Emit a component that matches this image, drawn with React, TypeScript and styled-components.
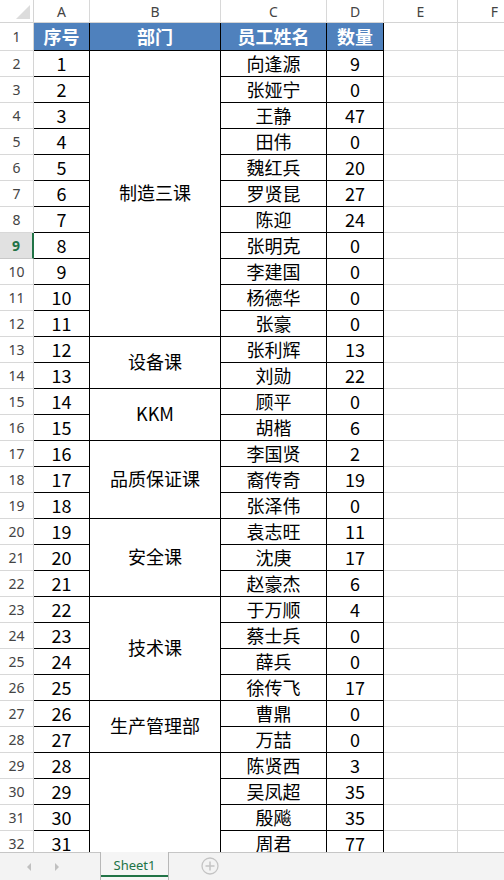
import React from "react";
import styled, { createGlobalStyle, css } from "styled-components";

const Global = createGlobalStyle`
  html, body { margin: 0; padding: 0; background: #fff; overflow: hidden; }
  #root { width: 504px; height: 880px; }
`;

const Page = styled.div`
  width: 504px;
  height: 880px;
  display: flex;
  flex-direction: column;
  overflow: hidden;
`;

const SheetArea = styled.div`
  flex: 0 0 852px;
  overflow: hidden;
`;

const Grid = styled.div`
  display: grid;
  grid-template-columns: 34px 56px 131px 106px 57px 74px 74px;
  grid-template-rows: 23px 28px repeat(31, 26px);
  font-family: "Noto Sans CJK SC", "Noto Sans", sans-serif;
`;

const centered = css`
  box-sizing: border-box;
  display: flex;
  align-items: center;
  justify-content: center;
  overflow: hidden;
  white-space: nowrap;
`;

const Corner = styled.div`
  ${centered};
  border-right: 1px solid #d4d4d4;
  border-bottom: 1px solid #d4d4d4;
  justify-content: flex-end;
  align-items: flex-end;
  padding: 0 3px 3px 0;
`;

const ColHeader = styled.div`
  ${centered};
  border-right: 1px solid #d8d8d8;
  border-bottom: 1px solid #d4d4d4;
  font-family: "Noto Sans", "Liberation Sans", sans-serif;
  font-size: 14px;
  color: #444;
  padding-top: 1px;
`;

const RowHeader = styled.div<{ $selected?: boolean }>`
  ${centered};
  border-right: 1px solid #d4d4d4;
  border-bottom: 1px solid #d8d8d8;
  font-family: "Noto Sans", "Liberation Sans", sans-serif;
  font-size: 14px;
  color: #444;
  ${(p) =>
    p.$selected &&
    css`
      background: #e1e1e1;
      color: #217346;
      font-weight: bold;
      border-right: 2px solid #217346;
      border-bottom-color: #c8c8c8;
    `}
`;

const HeadCell = styled.div`
  ${centered};
  background: #4f81bd;
  color: #fff;
  font-weight: bold;
  font-size: 18px;
  padding-bottom: 1px;
  border-right: 1px solid #000;
  border-bottom: 1px solid #000;
`;

const Cell = styled.div`
  ${centered};
  font-size: 18px;
  color: #000;
  padding-bottom: 2px;
  border-right: 1px solid #000;
  border-bottom: 1px solid #000;
`;

const MergedCell = styled(Cell)<{ $span: number }>`
  grid-row: span ${(p) => p.$span};
  padding-bottom: 4px;
`;

const EmptyCell = styled.div`
  box-sizing: border-box;
  border-right: 1px solid #dadada;
  border-bottom: 1px solid #dadada;
`;

const TabBar = styled.div`
  flex: 1;
  box-sizing: border-box;
  background: #f3f3f3;
  border-top: 1px solid #c6c6c6;
  display: flex;
  align-items: stretch;
`;

const NavGroup = styled.div`
  width: 100px;
  box-sizing: border-box;
  display: flex;
  align-items: center;
  gap: 24px;
  padding-left: 27px;
`;

const NavArrow = styled.span<{ $dir: "left" | "right" }>`
  width: 0;
  height: 0;
  border-top: 4px solid transparent;
  border-bottom: 4px solid transparent;
  ${(p) =>
    p.$dir === "left"
      ? css`border-right: 4px solid #c0c0c0;`
      : css`border-left: 4px solid #c0c0c0;`}
`;

const Tab = styled.div`
  box-sizing: border-box;
  width: 69px;
  margin-top: -1px;
  background: #f5f5f5;
  border-left: 1px solid #b8b8b8;
  border-right: 1px solid #b8b8b8;
  display: flex;
  align-items: center;
  justify-content: center;
  position: relative;
  font-family: "Noto Sans", "Liberation Sans", sans-serif;
  font-size: 13px;
  color: #217346;
  padding-bottom: 3px;
  &::after {
    content: "";
    position: absolute;
    left: 0;
    right: 0;
    bottom: 3px;
    height: 2px;
    background: #217346;
  }
`;

const AddButton = styled.div`
  margin-left: 32px;
  display: flex;
  align-items: center;
  padding-bottom: 2px;
`;

type Row = { n: number; name: string; qty: number };

const rows: Row[] = [
  [1, "向逢源", 9], [2, "张娅宁", 0], [3, "王静", 47], [4, "田伟", 0],
  [5, "魏红兵", 20], [6, "罗贤昆", 27], [7, "陈迎", 24], [8, "张明克", 0],
  [9, "李建国", 0], [10, "杨德华", 0], [11, "张豪", 0], [12, "张利辉", 13],
  [13, "刘勋", 22], [14, "顾平", 0], [15, "胡楷", 6], [16, "李国贤", 2],
  [17, "裔传奇", 19], [18, "张泽伟", 0], [19, "袁志旺", 11], [20, "沈庚", 17],
  [21, "赵豪杰", 6], [22, "于万顺", 4], [23, "蔡士兵", 0], [24, "薛兵", 0],
  [25, "徐传飞", 17], [26, "曹鼎", 0], [27, "万喆", 0], [28, "陈贤西", 3],
  [29, "吴凤超", 35], [30, "殷飚", 35], [31, "周君", 77],
].map(([n, name, qty]) => ({ n: n as number, name: name as string, qty: qty as number }));

// department merges: start index (0-based data row) -> [label, span]
const depts: Record<number, [string, number]> = {
  0: ["制造三课", 11],
  11: ["设备课", 2],
  13: ["KKM", 2],
  15: ["品质保证课", 3],
  18: ["安全课", 3],
  21: ["技术课", 4],
  25: ["生产管理部", 2],
  27: ["", 4],
};

const CornerMark = () => (
  <svg width="14" height="14" viewBox="0 0 14 14">
    <polygon points="14,0 14,14 0,14" fill="#dcdcdc" />
  </svg>
);

const PlusCircle = () => (
  <svg width="18" height="18" viewBox="0 0 18 18">
    <circle cx="9" cy="9" r="8" fill="none" stroke="#c4c4c4" strokeWidth="1.3" />
    <path d="M9 4.5v9M4.5 9h9" stroke="#c4c4c4" strokeWidth="1.5" />
  </svg>
);

export default function App() {
  const cols = ["A", "B", "C", "D", "E", "F"];
  return (
    <Page>
      <Global />
      <SheetArea>
        <Grid>
          <Corner>
            <CornerMark />
          </Corner>
          {cols.map((c) => (
            <ColHeader key={c}>{c}</ColHeader>
          ))}

          <RowHeader>1</RowHeader>
          <HeadCell>序号</HeadCell>
          <HeadCell>部门</HeadCell>
          <HeadCell>员工姓名</HeadCell>
          <HeadCell>数量</HeadCell>
          <EmptyCell />
          <EmptyCell />

          {rows.map((r, i) => {
            const d = depts[i];
            return (
              <React.Fragment key={r.n}>
                <RowHeader $selected={i + 2 === 9}>{i + 2}</RowHeader>
                <Cell>{r.n}</Cell>
                {d && <MergedCell $span={d[1]}>{d[0]}</MergedCell>}
                <Cell>{r.name}</Cell>
                <Cell>{r.qty}</Cell>
                <EmptyCell />
                <EmptyCell />
              </React.Fragment>
            );
          })}
        </Grid>
      </SheetArea>
      <TabBar>
        <NavGroup>
          <NavArrow $dir="left" />
          <NavArrow $dir="right" />
        </NavGroup>
        <Tab>Sheet1</Tab>
        <AddButton>
          <PlusCircle />
        </AddButton>
      </TabBar>
    </Page>
  );
}
